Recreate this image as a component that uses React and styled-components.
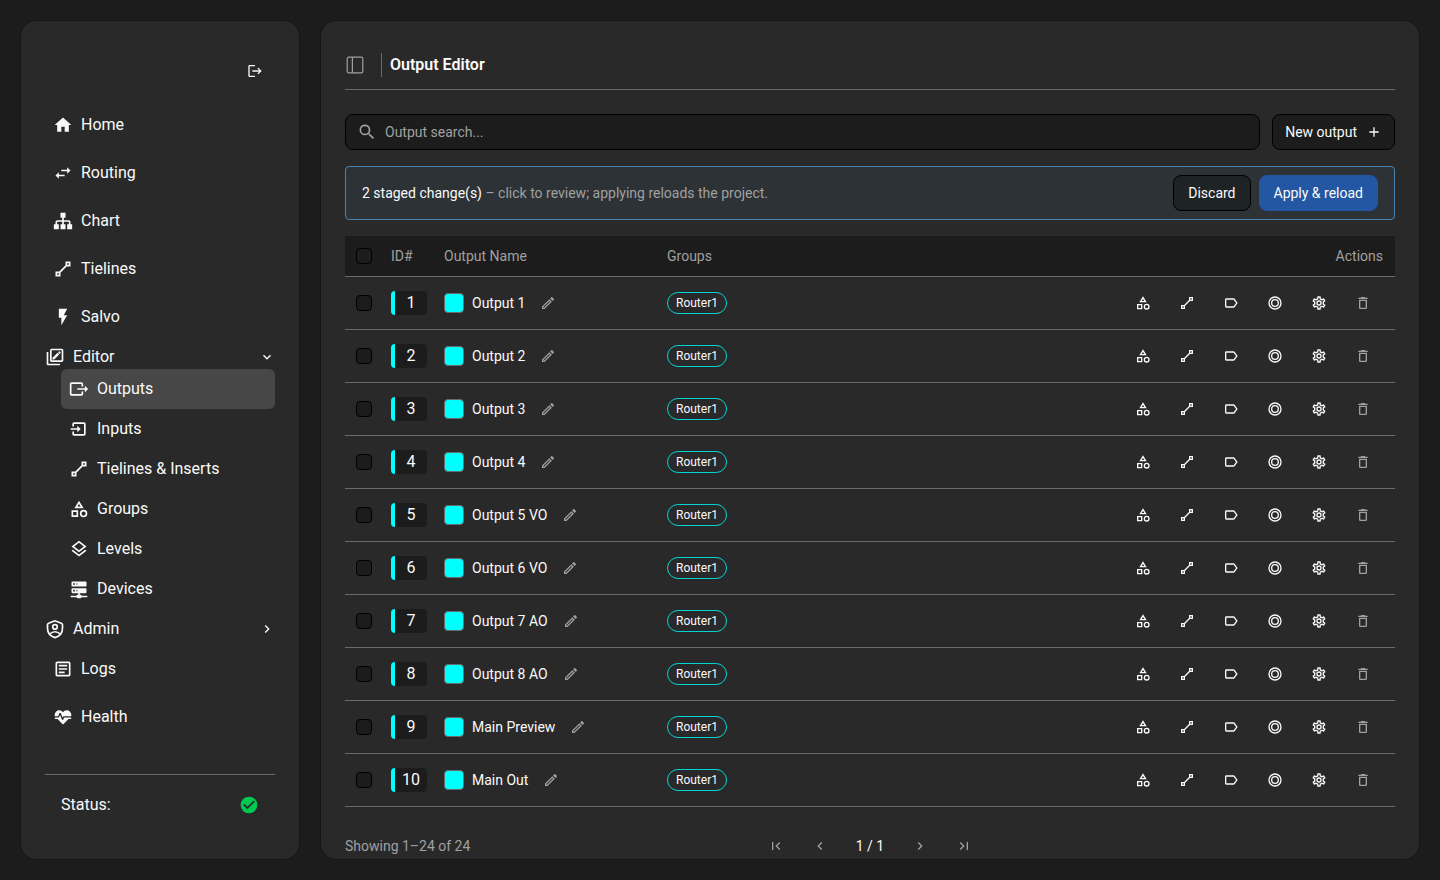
import styled, { createGlobalStyle } from 'styled-components';

const ICON = {
	HOME: 'M10 20v-6h4v6h5v-8h3L12 3 2 12h3v8z',
	SWAP: 'M21 9l-4-4v3h-7v2h7v3M7 11l-4 4 4 4v-3h7v-2H7v-3z',
	SITEMAP:
		'M9 2v6h2v3H5c-1.1 0-2 .9-2 2v3H1v6h6v-6H5v-3h6v3H9v6h6v-6h-2v-3h6v3h-2v6h6v-6h-2v-3c0-1.1-.9-2-2-2h-6V8h2V2H9z',
	LINE: 'M15 3v4.59L7.59 15H3v6h6v-4.58L16.42 9H21V3m-4 2h2v2h-2M5 17h2v2H5',
	FLASH: 'M7 2v11h3v9l7-12h-4l4-8z',
	EDITOR:
		'M20 4v12H8V4h12m0-2H8c-1.1 0-2 .9-2 2v12c0 1.1.9 2 2 2h12c1.1 0 2-.9 2-2V4c0-1.1-.9-2-2-2M4 6H2v14c0 1.1.9 2 2 2h14v-2H4V6m14.7 1.35l-1 1-2.05-2.05 1-1c.21-.22.56-.22.77 0l1.28 1.28c.22.21.22.56 0 .77M9 12.94l6.06-6.06 2.06 2.06L11.06 15H9v-2.06z',
	OUTPUT:
		'M23 12l-4-4v3h-9v2h9v3M1 18V6c0-1.1.9-2 2-2h12a2 2 0 0 1 2 2v3h-2V6H3v12h12v-3h2v3a2 2 0 0 1-2 2H3a2 2 0 0 1-2-2z',
	INPUT:
		'M14 12l-4-4v3H2v2h8v3m10 2V6c0-1.1-.9-2-2-2H6a2 2 0 0 0-2 2v3h2V6h12v12H6v-3H4v3a2 2 0 0 0 2 2h12a2 2 0 0 0 2-2z',
	SHAPES:
		'M11 13.5v8H3v-8h8m-2 2H5v4h4v-4M12 2l5.5 9h-11L12 2m0 3.86L10.08 9h3.84L12 5.86M17.5 13a4.5 4.5 0 1 1 0 9 4.5 4.5 0 0 1 0-9m0 2a2.5 2.5 0 1 0 0 5 2.5 2.5 0 0 0 0-5z',
	LAYERS:
		'M12 18.54l7.37-5.74L21 14.07l-9 7-9-7 1.62-1.26L12 18.54M12 16l-9-7 9-7 9 7-9 7m0-11.47L6.26 9 12 13.47 17.74 9 12 4.53z',
	SERVER:
		'M13 19h1a1 1 0 0 1 1 1h7v2h-7a1 1 0 0 1-1 1h-4a1 1 0 0 1-1-1H2v-2h7a1 1 0 0 1 1-1h1v-2H4a1 1 0 0 1-1-1v-4a1 1 0 0 1 1-1h16a1 1 0 0 1 1 1v4a1 1 0 0 1-1 1h-7v2M4 3h16a1 1 0 0 1 1 1v4a1 1 0 0 1-1 1H4a1 1 0 0 1-1-1V4a1 1 0 0 1 1-1m5 4h1V5H9v2m0 8h1v-2H9v2M5 5v2h2V5H5m0 8v2h2v-2H5z',
	ARTICLE:
		'M19 5v14H5V5h14m0-2H5c-1.1 0-2 .9-2 2v14c0 1.1.9 2 2 2h14c1.1 0 2-.9 2-2V5c0-1.1-.9-2-2-2zm-5 14H7v-2h7v2zm3-4H7v-2h10v2zm0-4H7V7h10v2z',
	HEART:
		'M7.5 4A5.5 5.5 0 0 0 2 9.5c0 .5.09 1 .22 1.5H6.3l1.27-3.37c.3-.8 1.48-.88 1.86 0L11.5 13l.59-1.42c.13-.33.48-.58.91-.58h8.78c.13-.5.22-1 .22-1.5A5.5 5.5 0 0 0 16.5 4C14.64 4 13 4.93 12 6.34 11 4.93 9.36 4 7.5 4M3 12.5a1 1 0 0 0 0 2h2.44L11 20c1 .9 1 .9 2 0l5.56-5.5H21a1 1 0 0 0 0-2h-7.6l-.93 2.3c-.4 1.01-1.55.87-1.92.03L8.5 9.5l-.96 2.33c-.15.38-.49.67-.94.67H3z',
	LOGOUT:
		'M17 7l-1.41 1.41L18.17 11H8v2h10.17l-2.58 2.58L17 17l5-5M4 5h8V3H4c-1.1 0-2 .9-2 2v14c0 1.1.9 2 2 2h8v-2H4V5z',
	CHECK:
		'M12 2a10 10 0 1 0 0 20 10 10 0 0 0 0-20m-2 15l-5-5 1.41-1.41L10 14.17l7.59-7.59L19 8l-9 9z',
	SEARCH:
		'M9.5 3a6.5 6.5 0 0 1 4.94 10.73l.27.27h.79l5 5-1.5 1.5-5-5v-.79l-.27-.27A6.5 6.5 0 1 1 9.5 3m0 2a4.5 4.5 0 1 0 0 9 4.5 4.5 0 0 0 0-9z',
	PLUS: 'M19 13h-6v6h-2v-6H5v-2h6V5h2v6h6v2z',
	PENCIL:
		'M14.06 9l.94.94L5.92 19H5v-.92L14.06 9m3.6-6c-.25 0-.51.1-.7.29l-1.83 1.83 3.75 3.75 1.83-1.83c.39-.39.39-1.04 0-1.41l-2.34-2.34c-.2-.2-.45-.29-.71-.29m-3.6 3.19L3 17.25V21h3.75L17.81 9.94l-3.75-3.75z',
	LABEL:
		'M16 17H5V7h11l3.55 5M17.63 5.84C17.27 5.33 16.67 5 16 5H5a2 2 0 0 0-2 2v10a2 2 0 0 0 2 2h11c.67 0 1.27-.34 1.63-.85L22 12l-4.37-6.16z',
	RINGS:
		'M12 2a10 10 0 1 0 0 20 10 10 0 0 0 0-20m0 2a8 8 0 1 1 0 16 8 8 0 0 1 0-16m0 2a6 6 0 1 0 0 12 6 6 0 0 0 0-12m0 2a4 4 0 1 1 0 8 4 4 0 0 1 0-8z',
	GEAR: 'M12 8a4 4 0 1 1 0 8 4 4 0 0 1 0-8m0 2a2 2 0 1 0 0 4 2 2 0 0 0 0-4m-2 12c-.25 0-.46-.18-.5-.42l-.37-2.65c-.63-.25-1.17-.59-1.69-.99l-2.49 1.01c-.22.08-.49 0-.61-.22l-2-3.46a.49.49 0 0 1 .12-.64l2.11-1.66L4.5 12l.07-1-2.11-1.63a.49.49 0 0 1-.12-.64l2-3.46c.12-.22.39-.31.61-.22l2.49 1c.52-.39 1.06-.73 1.69-.98l.37-2.65c.04-.24.25-.42.5-.42h4c.25 0 .46.18.5.42l.37 2.65c.63.25 1.17.59 1.69.98l2.49-1c.22-.09.49 0 .61.22l2 3.46c.13.22.07.49-.12.64L19.43 11l.07 1-.07 1 2.11 1.63c.19.15.25.42.12.64l-2 3.46c-.12.22-.39.31-.61.22l-2.49-1c-.52.39-1.06.73-1.69.98l-.37 2.65c-.04.24-.25.42-.5.42h-4m1.25-18l-.37 2.61c-1.2.25-2.26.89-3.03 1.78L5.44 7.35l-.75 1.3L6.8 10.2a5.55 5.55 0 0 0 0 3.6l-2.12 1.56.75 1.3 2.43-1.04c.77.88 1.82 1.52 3.01 1.76l.37 2.62h1.52l.37-2.61c1.19-.25 2.24-.89 3.01-1.77l2.43 1.04.75-1.3-2.12-1.55c.4-1.17.4-2.44 0-3.61l2.11-1.55-.75-1.3-2.41 1.04a5.42 5.42 0 0 0-3.03-1.77L12.75 4h-1.5z',
	TRASH: 'M6 19a2 2 0 0 0 2 2h8a2 2 0 0 0 2-2V7H6v12M8 9h8v10H8V9m7.5-5l-1-1h-5l-1 1H5v2h14V4h-3.5z',
	DOWN: 'M7.41 8.58L12 13.17l4.59-4.59L18 10l-6 6-6-6 1.41-1.42z',
	RIGHT: 'M8.59 16.58L13.17 12 8.59 7.41 10 6l6 6-6 6-1.41-1.42z',
	LEFT: 'M15.41 16.58L10.83 12l4.58-4.59L14 6l-6 6 6 6 1.41-1.42z',
	FIRST: 'M18.41 16.59L13.82 12l4.59-4.59L17 6l-6 6 6 6 1.41-1.41M6 6h2v12H6V6z',
	LAST: 'M5.59 7.41L10.18 12l-4.59 4.59L7 18l6-6-6-6-1.41 1.41M16 6h2v12h-2V6z',
};

const mainLinks = [
	{ name: 'Home', icon: ICON.HOME },
	{ name: 'Routing', icon: ICON.SWAP },
	{ name: 'Chart', icon: ICON.SITEMAP },
	{ name: 'Tielines', icon: ICON.LINE },
	{ name: 'Salvo', icon: ICON.FLASH },
];

const editorLinks = [
	{ name: 'Outputs', icon: ICON.OUTPUT, active: true },
	{ name: 'Inputs', icon: ICON.INPUT },
	{ name: 'Tielines & Inserts', icon: ICON.LINE },
	{ name: 'Groups', icon: ICON.SHAPES },
	{ name: 'Levels', icon: ICON.LAYERS },
	{ name: 'Devices', icon: ICON.SERVER },
];

const bottomLinks = [
	{ name: 'Logs', icon: ICON.ARTICLE },
	{ name: 'Health', icon: ICON.HEART },
];

const outputs = [
	'Output 1',
	'Output 2',
	'Output 3',
	'Output 4',
	'Output 5 VO',
	'Output 6 VO',
	'Output 7 AO',
	'Output 8 AO',
	'Main Preview',
	'Main Out',
].map((name, index) => ({ id: index + 1, name, group: 'Router1' }));

const rowActions = [
	{ label: 'Groups', icon: ICON.SHAPES },
	{ label: 'Tielines', icon: ICON.LINE },
	{ label: 'Label', icon: ICON.LABEL },
	{ label: 'Tally', icon: ICON.RINGS },
	{ label: 'Settings', icon: ICON.GEAR },
	{ label: 'Delete', icon: ICON.TRASH, muted: true },
];

const GlobalStyle = createGlobalStyle`
	* {
		box-sizing: border-box;
	}
	body {
		margin: 0;
		background-color: #1c1c1c;
		color: #fafafa;
		font-family: Roboto, 'Liberation Sans', sans-serif;
		font-size: 14px;
		line-height: 20px;
	}
	button,
	input {
		font: inherit;
		color: inherit;
	}
	button {
		cursor: pointer;
	}
`;

const Svg = styled.svg`
	display: block;
	flex: none;
	width: ${({ $size = 20 }) => $size}px;
	height: ${({ $size = 20 }) => $size}px;
	fill: currentColor;
`;

const Icon = ({ path, size }) => (
	<Svg viewBox="0 0 24 24" $size={size} aria-hidden="true">
		<path fillRule="evenodd" d={path} />
	</Svg>
);

const StrokeSvg = styled(Svg)`
	fill: none;
	stroke: currentColor;
`;

const ShieldIcon = () => (
	<StrokeSvg viewBox="0 0 24 24" strokeWidth="2" aria-hidden="true">
		<path d="M12 2.2 4.4 5Q3 5.5 3 7v4c0 5.4 3.6 9.6 9 11.3 5.4-1.7 9-5.9 9-11.3V7q0-1.5-1.4-2z" />
		<circle cx="12" cy="9.5" r="2.7" />
		<path d="M6 18c1.7-2 3.5-2.7 6-2.7s4.3.7 6 2.7" />
	</StrokeSvg>
);

const PanelIcon = () => (
	<StrokeSvg viewBox="0 0 20 20" strokeWidth="1.2" aria-hidden="true">
		<rect x="2.2" y="2.2" width="15.6" height="15.6" rx="1.6" />
		<path d="M7.4 2.2v15.6" />
	</StrokeSvg>
);

const Layout = styled.div`
	display: grid;
	grid-template-columns: 280px minmax(0, 1fr);
	gap: 20px;
	height: 100vh;
	padding: 20px;
`;

const Panel = styled.div`
	display: flex;
	flex-direction: column;
	min-height: 0;
	padding: 24px;
	overflow: hidden;
	background-color: #292929;
	border: 1px solid #151515;
	border-radius: 16px;
`;

const SidebarTop = styled.div`
	display: flex;
	justify-content: flex-end;
	padding: 8px 2px 16px;
`;

const IconButton = styled.button`
	display: flex;
	align-items: center;
	justify-content: center;
	width: ${({ $width = 36 }) => $width}px;
	height: 36px;
	padding: 0;
	background: none;
	border: none;
	color: ${({ $muted }) => ($muted ? '#a0a0a0' : '#fafafa')};
`;

const NavList = styled.ul`
	display: flex;
	flex-direction: column;
	gap: ${({ $nested }) => ($nested ? 0 : 8)}px;
	margin: 0;
	padding: 0 0 0 ${({ $nested }) => ($nested ? 16 : 0)}px;
	list-style: none;
	font-size: 16px;
`;

const NavLink = styled.a`
	display: flex;
	align-items: center;
	gap: 8px;
	height: 40px;
	padding: 0 8px;
	color: inherit;
	text-decoration: none;
	border-radius: 6px;
	background-color: ${({ $active }) => ($active ? '#474747' : 'transparent')};
`;

const NavGroup = styled.button`
	display: flex;
	align-items: center;
	gap: 8px;
	width: 100%;
	height: 24px;
	padding: 0;
	background: none;
	border: none;
	text-align: left;

	span {
		flex: 1;
	}
`;

const SidebarStatus = styled.div`
	display: flex;
	align-items: center;
	justify-content: space-between;
	height: 61px;
	margin-top: auto;
	padding: 0 16px;
	border-top: 1px solid #6a6a6a;
	font-size: 16px;

	svg {
		color: #00c950;
	}
`;

const PageHeader = styled.header`
	display: flex;
	align-items: center;
	height: 45px;
	padding-bottom: 4px;
	border-bottom: 1px solid #6a6a6a;
	flex: none;
`;

const PageTitle = styled.h1`
	margin: 0 0 0 16px;
	padding-left: 8px;
	border-left: 1px solid #6a6a6a;
	font-size: 16px;
	line-height: 24px;
	font-weight: 600;
`;

const Toolbar = styled.div`
	display: flex;
	gap: 12px;
	margin: 24px 0 16px;
`;

const SearchBox = styled.label`
	display: flex;
	flex: 1;
	align-items: center;
	gap: 8px;
	height: 36px;
	padding: 0 11px;
	background-color: #1c1c1c;
	border: 1px solid #000000;
	border-radius: 8px;
	color: #a0a0a0;

	input {
		flex: 1;
		min-width: 0;
		padding: 0;
		background: none;
		border: none;
		outline: none;
	}
	input::placeholder {
		color: #a0a0a0;
		opacity: 1;
	}
`;

const Button = styled.button`
	display: flex;
	align-items: center;
	justify-content: center;
	gap: 9px;
	height: 36px;
	padding: 0 ${({ $onBanner, $primary }) => ($primary || $onBanner ? 14 : 12)}px;
	white-space: nowrap;
	border-radius: 8px;
	border: 1px solid ${({ $primary }) => ($primary ? '#2356a3' : '#000000')};
	background-color: ${({ $primary, $onBanner }) =>
		$primary ? '#2356a3' : $onBanner ? '#1e2326' : '#1c1c1c'};
`;

const Banner = styled.div`
	display: flex;
	align-items: center;
	gap: 8px;
	height: 54px;
	flex: none;
	margin-bottom: 16px;
	padding: 0 16px;
	background-color: #2c3236;
	border: 1px solid #4a83ae;
	border-radius: 4px;
	color: #a0a0a0;

	p {
		flex: 1;
		margin: 0;
	}
	strong {
		font-weight: 400;
		color: #fafafa;
	}
	button {
		color: #fafafa;
	}
`;

const Table = styled.table`
	width: 100%;
	table-layout: fixed;
	border-collapse: separate;
	border-spacing: 0;

	th,
	td {
		padding: 0 12px;
		border-bottom: 1px solid #6a6a6a;
		text-align: left;
	}
	th {
		height: 41px;
		background-color: #1c1c1c;
		color: #a0a0a0;
		font-weight: 400;
	}
	td {
		height: 53px;
	}
	th:first-child,
	td:first-child {
		padding: 0 0 0 11px;
	}
	th:last-child {
		text-align: right;
	}
`;

const Column = styled.col`
	width: ${({ $width }) => $width}px;
`;

const Checkbox = styled.input`
	display: block;
	appearance: none;
	width: 16px;
	height: 16px;
	margin: 0;
	background-color: #1c1c1c;
	border: 1px solid #000000;
	border-radius: 4px;
`;

const IdBadge = styled.span`
	display: block;
	width: fit-content;
	min-width: 36px;
	padding: 0 7px;
	background-color: #1c1c1c;
	border-left: 4px solid #00ffff;
	border-radius: 4px;
	font-size: 16px;
	line-height: 24px;
	text-align: center;
`;

const NameCell = styled.div`
	display: flex;
	align-items: center;
	gap: 5px;
`;

const Swatch = styled.span`
	width: 20px;
	height: 20px;
	margin-right: 3px;
	background-color: #00ffff;
	border: 1px solid #6a6a6a;
	border-radius: 4px;
`;

const Pill = styled.span`
	display: inline-block;
	padding: 0 8px;
	border: 1px solid #00d5d5;
	border-radius: 11px;
	font-size: 12px;
	line-height: 20px;
	vertical-align: middle;
`;

const Actions = styled.div`
	display: flex;
	justify-content: flex-end;
	gap: 4px;
`;

const Footer = styled.footer`
	display: grid;
	grid-template-columns: 1fr auto 1fr;
	align-items: center;
	margin-top: 21px;
	color: #a0a0a0;
`;

const Pager = styled.div`
	display: flex;
	align-items: center;
	gap: 8px;

	span {
		min-width: 48px;
		text-align: center;
		color: #fafafa;
	}
`;

const NavItem = ({ name, icon, active }) => (
	<li>
		<NavLink href="#" $active={active}>
			<Icon path={icon} />
			{name}
		</NavLink>
	</li>
);

const Sidebar = () => (
	<Panel as="aside">
		<SidebarTop>
			<IconButton aria-label="Log out">
				<Icon path={ICON.LOGOUT} size={16} />
			</IconButton>
		</SidebarTop>
		<nav>
			<NavList>
				{mainLinks.map((link) => (
					<NavItem key={link.name} {...link} />
				))}
				<li>
					<NavGroup>
						<Icon path={ICON.EDITOR} />
						<span>Editor</span>
						<Icon path={ICON.DOWN} size={16} />
					</NavGroup>
					<NavList $nested>
						{editorLinks.map((link) => (
							<NavItem key={link.name} {...link} />
						))}
					</NavList>
				</li>
				<li>
					<NavGroup>
						<ShieldIcon />
						<span>Admin</span>
						<Icon path={ICON.RIGHT} size={16} />
					</NavGroup>
				</li>
				{bottomLinks.map((link) => (
					<NavItem key={link.name} {...link} />
				))}
			</NavList>
		</nav>
		<SidebarStatus>
			Status:
			<Icon path={ICON.CHECK} />
		</SidebarStatus>
	</Panel>
);

const OutputRow = ({ id, name, group }) => (
	<tr>
		<td>
			<Checkbox type="checkbox" aria-label={`Select ${name}`} />
		</td>
		<td>
			<IdBadge>{id}</IdBadge>
		</td>
		<td>
			<NameCell>
				<Swatch />
				{name}
				<IconButton $muted aria-label={`Rename ${name}`}>
					<Icon path={ICON.PENCIL} size={16} />
				</IconButton>
			</NameCell>
		</td>
		<td>
			<Pill>{group}</Pill>
		</td>
		<td>
			<Actions>
				{rowActions.map(({ label, icon, muted }) => (
					<IconButton key={label} $width={40} $muted={muted} aria-label={label}>
						<Icon path={icon} size={16} />
					</IconButton>
				))}
			</Actions>
		</td>
	</tr>
);

const OutputTable = () => (
	<Table>
		<colgroup>
			<Column $width={34} />
			<Column $width={53} />
			<Column $width={223} />
			<col />
			<Column $width={300} />
		</colgroup>
		<thead>
			<tr>
				<th>
					<Checkbox type="checkbox" aria-label="Select all" />
				</th>
				<th>ID#</th>
				<th>Output Name</th>
				<th>Groups</th>
				<th>Actions</th>
			</tr>
		</thead>
		<tbody>
			{outputs.map((output) => (
				<OutputRow key={output.id} {...output} />
			))}
		</tbody>
	</Table>
);

const App = () => (
	<>
		<GlobalStyle />
		<Layout>
			<Sidebar />
			<Panel as="main">
				<PageHeader>
					<IconButton $width={20} $muted aria-label="Toggle sidebar">
						<PanelIcon />
					</IconButton>
					<PageTitle>Output Editor</PageTitle>
				</PageHeader>
				<Toolbar>
					<SearchBox>
						<Icon path={ICON.SEARCH} />
						<input type="search" placeholder="Output search..." aria-label="Output search" />
					</SearchBox>
					<Button>
						New output
						<Icon path={ICON.PLUS} size={16} />
					</Button>
				</Toolbar>
				<Banner>
					<p>
						<strong>2 staged change(s)</strong> – click to review; applying reloads the project.
					</p>
					<Button $onBanner>Discard</Button>
					<Button $primary>Apply & reload</Button>
				</Banner>
				<OutputTable />
				<Footer>
					Showing 1–24 of 24
					<Pager>
						<IconButton $muted aria-label="First page">
							<Icon path={ICON.FIRST} size={16} />
						</IconButton>
						<IconButton $muted aria-label="Previous page">
							<Icon path={ICON.LEFT} size={16} />
						</IconButton>
						<span>1 / 1</span>
						<IconButton $muted aria-label="Next page">
							<Icon path={ICON.RIGHT} size={16} />
						</IconButton>
						<IconButton $muted aria-label="Last page">
							<Icon path={ICON.LAST} size={16} />
						</IconButton>
					</Pager>
				</Footer>
			</Panel>
		</Layout>
	</>
);

export default App;
